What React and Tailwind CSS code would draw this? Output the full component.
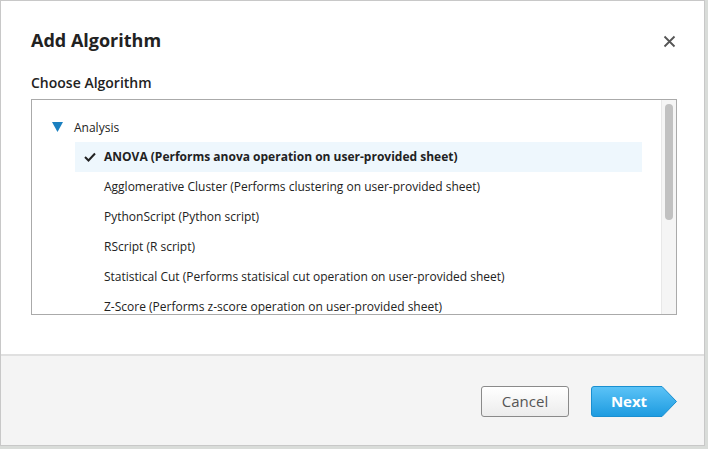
import React from "react";

const items = [
  "Agglomerative Cluster (Performs clustering on user-provided sheet)",
  "PythonScript (Python script)",
  "RScript (R script)",
  "Statistical Cut (Performs statisical cut operation on user-provided sheet)",
  "Z-Score (Performs z-score operation on user-provided sheet)",
];

export default function App() {
  return (
    <div
      className="w-[708px] h-[449px] bg-[#d9dcd9] overflow-hidden"
      style={{ fontFamily: '"Open Sans", "Noto Sans", sans-serif' }}
    >
      <div className="w-[705px] h-[446px] bg-white border border-[#c8c8c8] flex flex-col">
        <div className="flex-1 flex flex-col px-[30px]">
          <div className="flex items-center justify-between h-[80px] pt-[1px]">
            <div className="text-[18px] font-bold text-[#222] leading-none pb-[4px]">Add Algorithm</div>
            <svg width="13" height="13" viewBox="0 0 13 13" className="-mr-[2px] mb-[1px]">
              <path d="M1.5 1.5 L11.5 11.5 M11.5 1.5 L1.5 11.5" stroke="#555" strokeWidth="1.8" />
            </svg>
          </div>
          <div className="text-[14px] font-semibold text-[#222] leading-none -mt-[5px] mb-[9px]">Choose Algorithm</div>
          <div className="h-[216px] w-[646px] border border-[#aaa] relative overflow-hidden">
            <div className="pt-[17px] pl-[20px] pr-[34px] text-[12px] text-[#222]">
              <div className="flex items-center h-[22px]">
                <svg width="11" height="10" viewBox="0 0 11 10" className="mr-[11px] mb-[3px]">
                  <path d="M0 0 L11 0 L5.5 10 Z" fill="#1b80c0" />
                </svg>
                <span>Analysis</span>
              </div>
              <div className="ml-[23px] mt-[3px] flex flex-col">
                <div className="flex items-center h-[30px] bg-[#eef7fd] pl-[9px] font-bold">
                  <svg width="12" height="10" viewBox="0 0 12 10" className="mr-[8px]">
                    <path d="M1 5 L4.5 8.5 L11 1.5" stroke="#222" strokeWidth="2" fill="none" />
                  </svg>
                  <span>ANOVA (Performs anova operation on user-provided sheet)</span>
                </div>
                {items.map((t) => (
                  <div key={t} className="flex items-center h-[30px] pl-[29px]">
                    {t}
                  </div>
                ))}
              </div>
            </div>
            <div className="absolute right-0 top-0 bottom-0 w-[15px] bg-[#f5f5f5] border-l border-[#e8e8e8]">
              <div className="absolute left-[3px] top-[4px] w-[8px] h-[116px] rounded-full bg-[#c1c1c1]" />
            </div>
          </div>
        </div>
        <div className="h-[91px] border-t-2 border-[#e0e0e0] bg-[#f4f4f4] flex items-start justify-end pt-[30px] pr-[27px] gap-[22px]">
          <div className="w-[88px] h-[31px] rounded-[3px] border border-[#8a8a8a] bg-gradient-to-b from-white to-[#ececec] flex items-center justify-center text-[15px] text-[#555]">
            Cancel
          </div>
          <div className="relative w-[86px] h-[31px] flex items-center">
            <svg width="86" height="31" viewBox="0 0 86 31" className="absolute inset-0">
              <defs>
                <linearGradient id="ng" x1="0" y1="0" x2="0" y2="1">
                  <stop offset="0" stopColor="#5cc3f7" />
                  <stop offset="1" stopColor="#1d9be0" />
                </linearGradient>
              </defs>
              <path
                d="M3 0.5 L71 0.5 L85.5 15.5 L71 30.5 L3 30.5 Q0.5 30.5 0.5 28 L0.5 3 Q0.5 0.5 3 0.5 Z"
                fill="url(#ng)"
                stroke="#1a8fd0"
              />
            </svg>
            <span className="relative w-[76px] text-center text-[15px] font-bold text-white">Next</span>
          </div>
        </div>
      </div>
    </div>
  );
}
